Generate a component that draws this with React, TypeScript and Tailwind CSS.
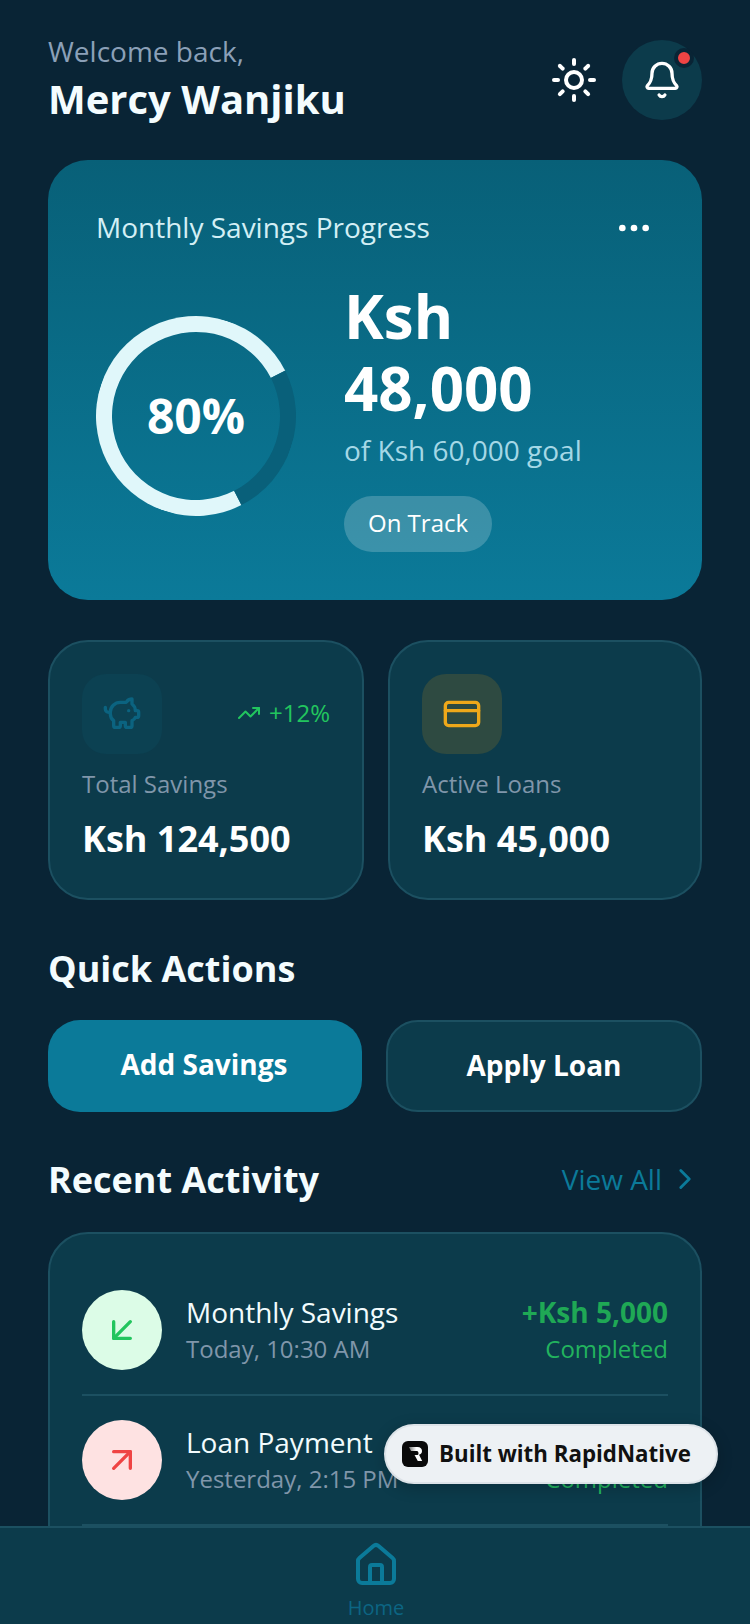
import { ArrowDownLeft, ArrowUpRight, Bell, ChevronRight, CreditCard, Ellipsis, House, PiggyBank, Sun, TrendingUp } from "lucide-react";

function ProgressCard() {
  return (
    <section className="rounded-[40px] bg-gradient-to-b from-[#086078] to-[#0b7a99] p-12">
      <div className="mb-8 flex h-10 items-center justify-between">
        <span className="pb-0.5 text-[28px] leading-10 text-[#d3eff5]">Monthly Savings Progress</span>
        <Ellipsis size={40} color="#ffffff" />
      </div>
      <div className="flex items-center gap-12">
        <div className="relative flex h-[200px] w-[200px] shrink-0 items-center justify-center">
          <div className="absolute inset-0 rotate-[18deg] rounded-full border-16 border-[#e0f7fa] border-r-[#09607a]"></div>
          <span className="text-[48px] font-bold leading-[56px] text-white">80%</span>
        </div>
        <div className="flex-1">
          <div className="text-[60px] font-bold leading-[72px] text-white">Ksh 48,000</div>
          <div className="mt-[6px] text-[28px] leading-10 text-[#a5d8e6]">of Ksh 60,000 goal</div>
          <div className="mt-[26px] inline-flex h-14 items-center rounded-full bg-white/20 px-6 pb-0.5 text-[24px] text-white">On Track</div>
        </div>
      </div>
    </section>
  );
}

function StatCard({ label, value, icon, boxClass, trend, sizeClass }: { label: string; value: string; icon: React.ReactNode; boxClass: string; trend?: string; sizeClass: string }) {
  return (
    <div className={`rounded-[40px] border-2 border-[#1c5061] bg-[#0c3b4b] px-8 pb-[35px] pt-8 ${sizeClass}`}>
      <div className="flex items-center justify-between">
        <div className={`flex h-20 w-20 items-center justify-center rounded-[24px] ${boxClass}`}>{icon}</div>
        {trend && (
          <div className="flex items-center gap-2 pb-0.5 text-[24px] text-[#22c55e]">
            <TrendingUp size={24} />
            {trend}
          </div>
        )}
      </div>
      <div className="mt-3 text-[24px] leading-9 text-[#8096aa]">{label}</div>
      <div className="mt-[13px] text-[36px] font-bold leading-[48px] text-white">{value}</div>
    </div>
  );
}

function ActivityRow({ title, time, amount, status, icon, circleClass, amountClass }: { title: string; time: string; amount: string; status: string; icon: React.ReactNode; circleClass: string; amountClass: string }) {
  return (
    <div className="flex items-center gap-6 border-b-2 border-[#1c5061] py-6">
      <div className={`flex h-20 w-20 shrink-0 items-center justify-center rounded-full ${circleClass}`}>{icon}</div>
      <div className="flex-1">
        <div className="pb-[3px] text-[28px] leading-[35px] text-[#f2fbfd]">{title}</div>
        <div className="text-[24px] leading-8 text-[#8096aa]">{time}</div>
      </div>
      <div className="text-right">
        <div className={`pb-[3px] text-[28px] font-bold leading-[35px] ${amountClass}`}>{amount}</div>
        <div className="text-[24px] leading-8 text-[#22b35e]">{status}</div>
      </div>
    </div>
  );
}

export default function App() {
  return (
    <div className="relative flex h-[1624px] w-[750px] flex-col overflow-hidden bg-[#092435] font-['Open_Sans',sans-serif]">
      <main className="flex-1 overflow-hidden px-12 pt-10">
        <header className="mb-10 flex h-20 items-center justify-between">
          <div className="pt-[2px]">
            <div className="text-[28px] leading-[28px] text-[#8ba0b8]">Welcome back,</div>
            <div className="mt-[8px] text-[40px] font-bold leading-[52px] text-[#f4fcfe]">Mercy Wanjiku</div>
          </div>
          <div className="flex items-center gap-6">
            <Sun size={48} color="#ffffff" />
            <div className="relative flex h-20 w-20 items-center justify-center rounded-full bg-[#0c3b4b]">
              <Bell size={40} color="#ffffff" />
              <span className="absolute right-2 top-2 h-5 w-5 rounded-full border-4 border-[#092435] bg-[#ef4444]"></span>
            </div>
          </div>
        </header>

        <ProgressCard />

        <div className="mt-10 flex gap-6">
          <StatCard sizeClass="w-[316px] shrink-0" label="Total Savings" value="Ksh 124,500" trend="+12%" boxClass="bg-[#0c4152]" icon={<PiggyBank size={40} color="#0b6380" />} />
          <StatCard sizeClass="flex-1" label="Active Loans" value="Ksh 45,000" boxClass="bg-[#2e4a41]" icon={<CreditCard size={40} color="#efa81a" />} />
        </div>

        <h2 className="mt-[45px] text-[36px] font-bold leading-[48px] text-[#f4fcfe]">Quick Actions</h2>
        <div className="mt-[27px] flex gap-6">
          <button className="w-[314px] shrink-0 rounded-[32px] bg-[#0b7a99] pb-[30px] pr-0.5 pt-[26px] text-[28px] font-bold leading-9 text-white">
            <span className="block">Add Savings</span>
          </button>
          <button className="flex-1 rounded-[32px] border-2 border-[#1c5061] bg-[#0c3b4b] pb-[27px] pt-[25px] text-[28px] font-bold leading-9 text-white">
            <span className="block">Apply Loan</span>
          </button>
        </div>

        <div className="mt-11 flex items-center justify-between">
          <h2 className="text-[36px] font-bold leading-[48px] text-[#f4fcfe]">Recent Activity</h2>
          <div className="flex items-center gap-[6px] pb-0.5 text-[28px] text-[#0b7a99]">
            View All
            <ChevronRight size={34} />
          </div>
        </div>

        <div className="mt-7 rounded-t-[40px] border-2 border-[#1c5061] bg-[#0c3b4b] px-8 pt-8">
          <ActivityRow title="Monthly Savings" time="Today, 10:30 AM" amount="+Ksh 5,000" status="Completed" circleClass="bg-[#dcfce7]" amountClass="text-[#1fa855]" icon={<ArrowDownLeft size={40} color="#22c55e" />} />
          <ActivityRow title="Loan Payment" time="Yesterday, 2:15 PM" amount="-Ksh 3,000" status="Completed" circleClass="bg-[#fee2e2]" amountClass="text-[#f87171]" icon={<ArrowUpRight size={40} color="#ef4444" />} />
        </div>
      </main>

      <nav className="h-[98px] shrink-0 border-t-2 border-[#1c5061] bg-[#0c3b4b]">
        <div className="flex h-[87px] flex-col items-center overflow-hidden pl-0.5 pt-[13px]">
          <House size={48} color="#0b7a99" className="shrink-0" />
          <span className="mt-[5px] text-[20px] leading-7 text-[#0c6583]">Home</span>
        </div>
      </nav>

      <div className="absolute left-[384px] top-[1424px] flex h-[60px] w-[334px] items-center gap-[11px] rounded-full border-2 border-[#dde3e8] bg-[#edf1f4] pl-[16px] shadow-[0_4px_16px_rgba(0,0,0,0.2)]">
        <svg width="26" height="26" viewBox="0 0 26 26">
          <defs>
            <linearGradient id="logoFill" x1="0" x2="1" y1="0" y2="0">
              <stop offset="0" stopColor="#777777" />
              <stop offset="0.55" stopColor="#ffffff" />
            </linearGradient>
          </defs>
          <rect width="26" height="26" rx="6" fill="#0a0a0a" />
          <path d="M7 6h8.5c3 0 4.5 1.8 4.5 4 0 2-1.2 3.400-3 3.800l3.200 6.200h-4.400L12.500 14H15c.9 0 1.500-.6 1.500-1.600S15.900 10 15 10H9z" fill="url(#logoFill)" />
        </svg>
        <span className="text-[22.3px] font-bold leading-8 text-[#111111]">Built with RapidNative</span>
      </div>
    </div>
  );
}
